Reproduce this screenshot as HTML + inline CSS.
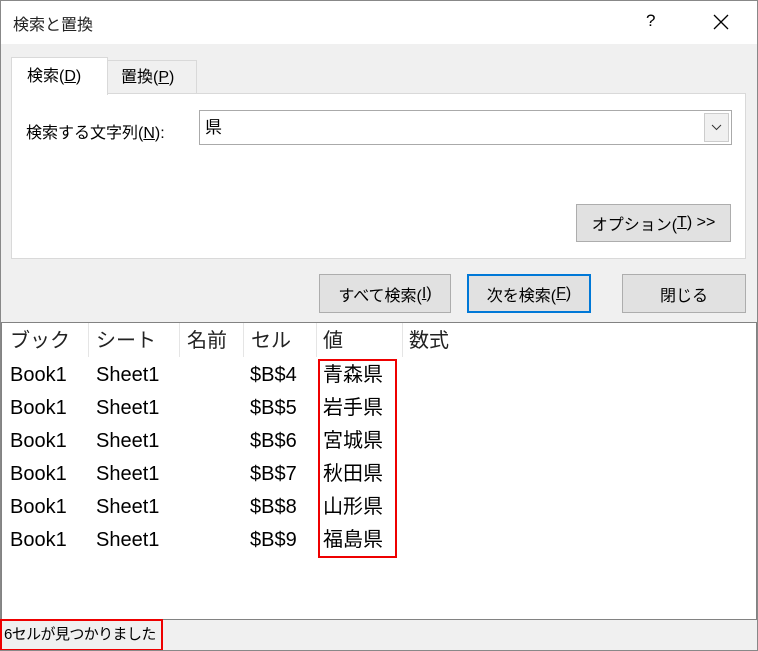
<!DOCTYPE html>
<html><head><meta charset="utf-8"><style>
*{margin:0;padding:0;box-sizing:border-box}
html,body{width:758px;height:651px;overflow:hidden}
body{background:#f0f0f0;font-family:"Liberation Sans","Noto Sans CJK JP",sans-serif;color:#000;position:relative;white-space:nowrap}
.a{position:absolute}
.btn{position:absolute;background:#e1e1e1;border:1px solid #adadad;font-size:16px;display:flex;align-items:center;justify-content:center}
.row{position:absolute;left:10px;font-size:20px;height:33px;line-height:33px;width:600px}
.row span{position:absolute;white-space:nowrap}
u{text-decoration:underline}
</style></head><body>
<div class="a" style="left:0;top:0;width:758px;height:44px;background:#fff;border:1px solid #888;border-bottom:none"></div>
<div class="a" style="left:13px;top:11px;font-size:16px;color:#222">検索と置換</div>
<div class="a" style="left:646px;top:11px;font-size:17px">?</div>
<svg class="a" style="left:713px;top:14px" width="16" height="16"><path d="M1 1L15 15M15 1L1 15" stroke="#000" stroke-width="1.3"/></svg>
<div class="a" style="left:0;top:44px;width:758px;height:607px;border-left:1px solid #888;border-right:1px solid #888"></div>
<div class="a" style="left:107px;top:60px;width:90px;height:34px;background:#f0f0f0;border:1px solid #d9d9d9;font-size:16px;line-height:34px;padding-left:13px">置換(<u>P</u>)</div>
<div class="a" style="left:11px;top:93px;width:735px;height:166px;background:#fff;border:1px solid #d9d9d9"></div>
<div class="a" style="left:11px;top:57px;width:97px;height:38px;background:#fff;border:1px solid #d9d9d9;border-bottom:none;font-size:16px;line-height:38px;padding-left:15px">検索(<u>D</u>)</div>
<div class="a" style="left:26px;top:119px;font-size:16px">検索する文字列(<u>N</u>):</div>
<div class="a" style="left:199px;top:110px;width:533px;height:35px;background:#fff;border:1px solid #aaa;font-size:17px;line-height:33px;padding-left:5px">県</div>
<div class="a" style="left:704px;top:113px;width:25px;height:29px;background:#f0f0f0;border:1px solid #ccc"></div>
<svg class="a" style="left:711px;top:124px" width="11" height="7"><path d="M1 1L5.5 5.5L10 1" stroke="#333" fill="none"/></svg>
<div class="btn" style="left:576px;top:204px;width:155px;height:38px">オプション(<u>T</u>) &gt;&gt;</div>
<div class="btn" style="left:319px;top:274px;width:132px;height:39px">すべて検索(<u>I</u>)</div>
<div class="btn" style="left:467px;top:274px;width:124px;height:39px;border:2px solid #0078d7">次を検索(<u>F</u>)</div>
<div class="btn" style="left:622px;top:274px;width:124px;height:39px">閉じる</div>
<div class="a" style="left:1px;top:322px;width:756px;height:298px;background:#fff;border:1px solid #828282"></div>
<div class="a" style="left:88px;top:323px;width:1px;height:34px;background:#e5e5e5"></div>
<div class="a" style="left:179px;top:323px;width:1px;height:34px;background:#e5e5e5"></div>
<div class="a" style="left:243px;top:323px;width:1px;height:34px;background:#e5e5e5"></div>
<div class="a" style="left:316px;top:323px;width:1px;height:34px;background:#e5e5e5"></div>
<div class="a" style="left:402px;top:323px;width:1px;height:34px;background:#e5e5e5"></div>
<div class="row" style="top:325px;color:#222"><span style="left:0">ブック</span><span style="left:86px">シート</span><span style="left:177px">名前</span><span style="left:241px">セル</span><span style="left:313px">値</span><span style="left:399px">数式</span></div>
<div class="row" style="top:359px"><span style="left:0">Book1</span><span style="left:86px">Sheet1</span><span style="left:240px">$B$4</span><span style="left:313px">青森県</span></div>
<div class="row" style="top:392px"><span style="left:0">Book1</span><span style="left:86px">Sheet1</span><span style="left:240px">$B$5</span><span style="left:313px">岩手県</span></div>
<div class="row" style="top:425px"><span style="left:0">Book1</span><span style="left:86px">Sheet1</span><span style="left:240px">$B$6</span><span style="left:313px">宮城県</span></div>
<div class="row" style="top:458px"><span style="left:0">Book1</span><span style="left:86px">Sheet1</span><span style="left:240px">$B$7</span><span style="left:313px">秋田県</span></div>
<div class="row" style="top:491px"><span style="left:0">Book1</span><span style="left:86px">Sheet1</span><span style="left:240px">$B$8</span><span style="left:313px">山形県</span></div>
<div class="row" style="top:524px"><span style="left:0">Book1</span><span style="left:86px">Sheet1</span><span style="left:240px">$B$9</span><span style="left:313px">福島県</span></div>
<div class="a" style="left:318px;top:359px;width:79px;height:199px;border:2px solid #e00"></div>
<div class="a" style="left:0;top:619px;width:163px;height:32px;border:2px solid #e00;font-size:15px;line-height:28px;padding-left:2px;overflow:hidden;letter-spacing:-0.6px">6セルが見つかりました</div>
<div class="a" style="left:0;top:650px;width:758px;height:1px;background:#888"></div>
</body></html>
